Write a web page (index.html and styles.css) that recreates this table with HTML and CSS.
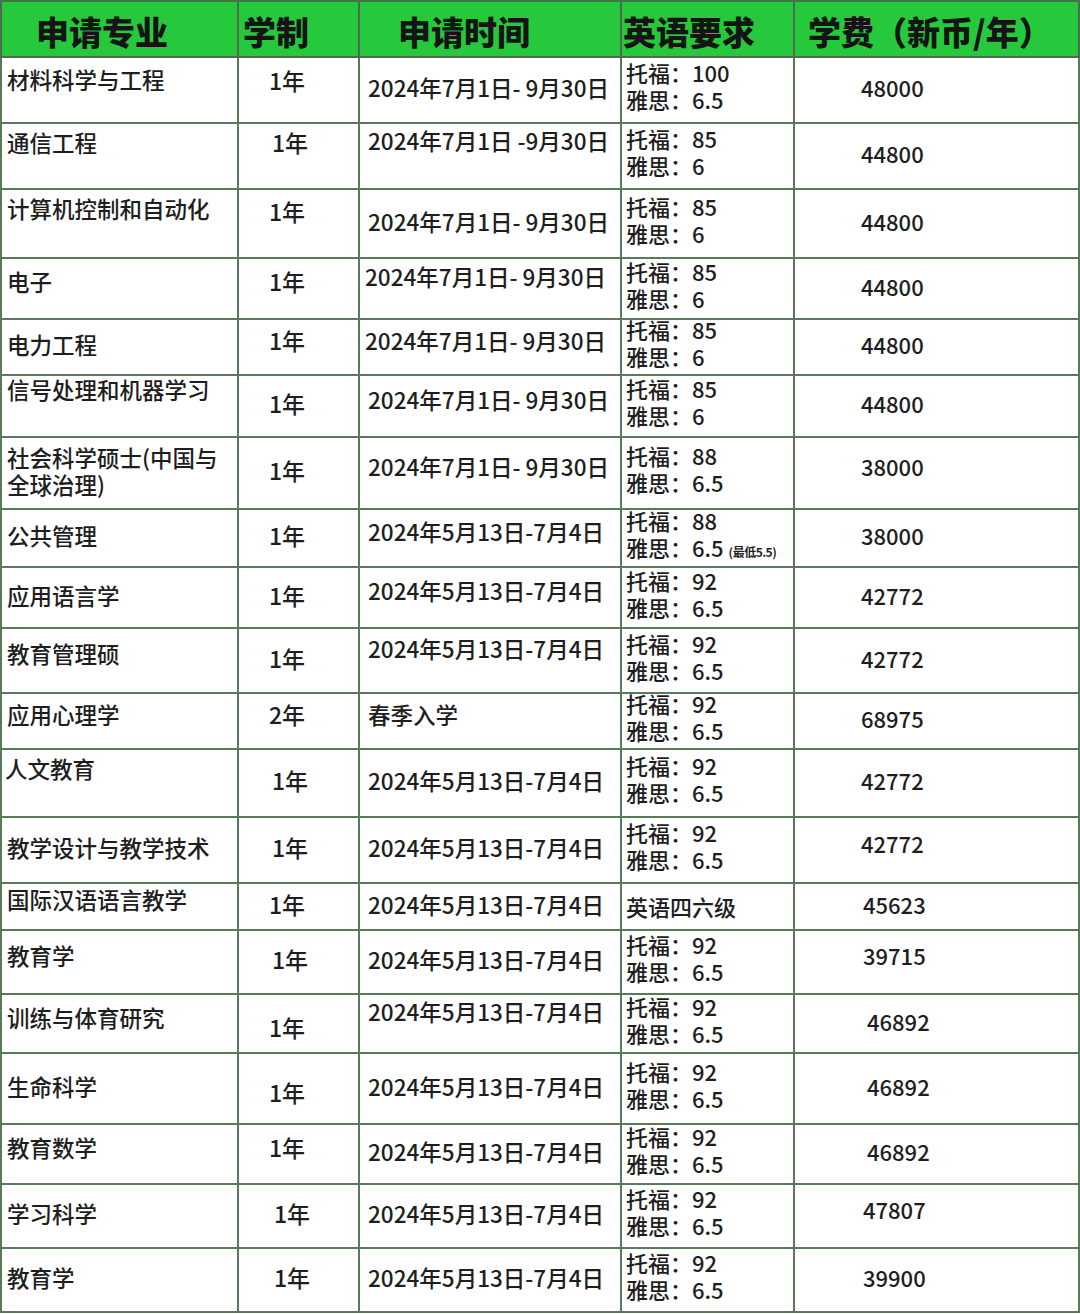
FILE: index.html
```html
<!DOCTYPE html>
<html lang="zh-CN">
<head>
<meta charset="utf-8">
<title>申请专业</title>
<link rel="stylesheet" href="styles.css">
</head>
<body>
<table class="sheet">
  <colgroup>
    <col class="c-major"><col class="c-len"><col class="c-date"><col class="c-eng"><col class="c-fee">
  </colgroup>
  <thead>
    <tr class="head">
      <th class="h-major">申请专业</th>
      <th class="h-len">学制</th>
      <th class="h-date">申请时间</th>
      <th class="h-eng">英语要求</th>
      <th class="h-fee">学费（新币/年）</th>
    </tr>
  </thead>
  <tbody>
    <tr>
      <td class="major top t8">材料科学与工程</td>
      <td class="len top t9">1年</td>
      <td class="date">2024年7月1日- 9月30日</td>
      <td class="eng"><div class="req">托福：100<br>雅思：6.5</div></td>
      <td class="fee">48000</td>
    </tr>
    <tr>
      <td class="major top t5">通信工程</td>
      <td class="len top t5 x3">1年</td>
      <td class="date top t3">2024年7月1日 -9月30日</td>
      <td class="eng"><div class="req">托福：85<br>雅思：6</div></td>
      <td class="fee">44800</td>
    </tr>
    <tr>
      <td class="major top t5">计算机控制和自动化</td>
      <td class="len top t8">1年</td>
      <td class="date">2024年7月1日- 9月30日</td>
      <td class="eng"><div class="req">托福：85<br>雅思：6</div></td>
      <td class="fee">44800</td>
    </tr>
    <tr>
      <td class="major up">电子</td>
      <td class="len up">1年</td>
      <td class="date up2 xl">2024年7月1日- 9月30日</td>
      <td class="eng"><div class="req">托福：85<br>雅思：6</div></td>
      <td class="fee">44800</td>
    </tr>
    <tr>
      <td class="major">电力工程</td>
      <td class="len up">1年</td>
      <td class="date up xl">2024年7月1日- 9月30日</td>
      <td class="eng"><div class="req">托福：85<br>雅思：6</div></td>
      <td class="fee">44800</td>
    </tr>
    <tr>
      <td class="major top t0">信号处理和机器学习</td>
      <td class="len">1年</td>
      <td class="date up">2024年7月1日- 9月30日</td>
      <td class="eng"><div class="req">托福：85<br>雅思：6</div></td>
      <td class="fee">44800</td>
    </tr>
    <tr>
      <td class="major two">社会科学硕士(中国与<br>全球治理)</td>
      <td class="len">1年</td>
      <td class="date up">2024年7月1日- 9月30日</td>
      <td class="eng"><div class="req">托福：88<br>雅思：6.5</div></td>
      <td class="fee up">38000</td>
    </tr>
    <tr>
      <td class="major">公共管理</td>
      <td class="len">1年</td>
      <td class="date up">2024年5月13日-7月4日</td>
      <td class="eng"><div class="req">托福：88<br>雅思：6.5 <span class="note">(最低5.5)</span></div></td>
      <td class="fee">38000</td>
    </tr>
    <tr>
      <td class="major">应用语言学</td>
      <td class="len">1年</td>
      <td class="date up">2024年5月13日-7月4日</td>
      <td class="eng"><div class="req">托福：92<br>雅思：6.5</div></td>
      <td class="fee">42772</td>
    </tr>
    <tr>
      <td class="major up">教育管理硕</td>
      <td class="len">1年</td>
      <td class="date up2">2024年5月13日-7月4日</td>
      <td class="eng"><div class="req">托福：92<br>雅思：6.5</div></td>
      <td class="fee">42772</td>
    </tr>
    <tr>
      <td class="major up">应用心理学</td>
      <td class="len up">2年</td>
      <td class="date up">春季入学</td>
      <td class="eng"><div class="req">托福：92<br>雅思：6.5</div></td>
      <td class="fee">68975</td>
    </tr>
    <tr>
      <td class="major top t5 x0">人文教育</td>
      <td class="len x3">1年</td>
      <td class="date">2024年5月13日-7月4日</td>
      <td class="eng"><div class="req">托福：92<br>雅思：6.5</div></td>
      <td class="fee">42772</td>
    </tr>
    <tr>
      <td class="major">教学设计与教学技术</td>
      <td class="len x3">1年</td>
      <td class="date">2024年5月13日-7月4日</td>
      <td class="eng"><div class="req">托福：92<br>雅思：6.5</div></td>
      <td class="fee up">42772</td>
    </tr>
    <tr>
      <td class="major up">国际汉语语言教学</td>
      <td class="len">1年</td>
      <td class="date">2024年5月13日-7月4日</td>
      <td class="eng">英语四六级</td>
      <td class="fee fx">45623</td>
    </tr>
    <tr>
      <td class="major up">教育学</td>
      <td class="len x3">1年</td>
      <td class="date">2024年5月13日-7月4日</td>
      <td class="eng"><div class="req">托福：92<br>雅思：6.5</div></td>
      <td class="fee fx up">39715</td>
    </tr>
    <tr>
      <td class="major top t9">训练与体育研究</td>
      <td class="len dn">1年</td>
      <td class="date up2">2024年5月13日-7月4日</td>
      <td class="eng"><div class="req">托福：92<br>雅思：6.5</div></td>
      <td class="fee fx2">46892</td>
    </tr>
    <tr>
      <td class="major">生命科学</td>
      <td class="len dn">1年</td>
      <td class="date">2024年5月13日-7月4日</td>
      <td class="eng"><div class="req">托福：92<br>雅思：6.5</div></td>
      <td class="fee fx2">46892</td>
    </tr>
    <tr>
      <td class="major up">教育数学</td>
      <td class="len up">1年</td>
      <td class="date">2024年5月13日-7月4日</td>
      <td class="eng"><div class="req">托福：92<br>雅思：6.5</div></td>
      <td class="fee fx2">46892</td>
    </tr>
    <tr>
      <td class="major">学习科学</td>
      <td class="len x4">1年</td>
      <td class="date">2024年5月13日-7月4日</td>
      <td class="eng"><div class="req">托福：92<br>雅思：6.5</div></td>
      <td class="fee fx up">47807</td>
    </tr>
    <tr>
      <td class="major">教育学</td>
      <td class="len x4">1年</td>
      <td class="date">2024年5月13日-7月4日</td>
      <td class="eng"><div class="req">托福：92<br>雅思：6.5</div></td>
      <td class="fee fx">39900</td>
    </tr>
  </tbody>
</table>
</body>
</html>
```
FILE: styles.css
```css
html, body {
  margin: 0;
  padding: 0;
  background: #ffffff;
}

body {
  width: 1080px;
  height: 1314px;
  overflow: hidden;
  font-family: "Noto Sans CJK SC", "Noto Sans", sans-serif;
  color: #1e1e1e;
}

.sheet {
  table-layout: fixed;
  border-collapse: collapse;
  width: 1078px;
  margin-left: 0;
}

.c-major { width: 237px; }
.c-len { width: 121px; }
.c-date { width: 262px; }
.c-eng { width: 173px; }
.c-fee { width: 285px; }

.sheet th,
.sheet td {
  border: 2px solid #587a58;
  padding: 0 0 5px 0;
  text-align: left;
  vertical-align: middle;
  white-space: nowrap;
}

.head {
  height: 56px;
  background: #26c93c;
}

.head th {
  font-size: 33px;
  font-weight: 900;
  line-height: 40px;
  color: #141414;
  padding: 3px 0 0 0;
  border-color: #4d6e4d;
}

.h-major { padding-left: 34px !important; }
.h-len { padding-left: 4px !important; }
.h-date { padding-left: 38px !important; }
.h-eng { padding-left: 1px !important; }
.h-fee { padding-left: 13px !important; }

tbody tr:nth-child(1) { height: 66px; }
tbody tr:nth-child(2) { height: 66px; }
tbody tr:nth-child(3) { height: 69px; }
tbody tr:nth-child(4) { height: 61px; }
tbody tr:nth-child(5) { height: 56px; }
tbody tr:nth-child(6) { height: 62px; }
tbody tr:nth-child(7) { height: 72px; }
tbody tr:nth-child(8) { height: 58px; }
tbody tr:nth-child(9) { height: 61px; }
tbody tr:nth-child(10) { height: 65px; }
tbody tr:nth-child(11) { height: 56px; }
tbody tr:nth-child(12) { height: 68px; }
tbody tr:nth-child(13) { height: 66px; }
tbody tr:nth-child(14) { height: 47px; }
tbody tr:nth-child(15) { height: 64px; }
tbody tr:nth-child(16) { height: 59px; }
tbody tr:nth-child(17) { height: 71px; }
tbody tr:nth-child(18) { height: 60px; }
tbody tr:nth-child(19) { height: 64px; }
tbody tr:nth-child(20) { height: 64px; }

.sheet td {
  font-size: 22px;
  font-weight: 500;
  line-height: 27px;
}

.major { padding-left: 5px !important; font-size: 22.5px !important; white-space: normal; }
.len { padding-left: 30px !important; font-size: 23px !important; }
.date { padding-left: 8px !important; font-size: 22.5px !important; }
.eng { padding-left: 4px !important; padding-bottom: 0 !important; }
.req { margin-top: -8px; }
.fee { padding-left: 66px !important; }

.top { vertical-align: top !important; padding-bottom: 0 !important; }
.t0 { padding-top: 0 !important; }
.t3 { padding-top: 3px !important; }
.t5 { padding-top: 5px !important; }
.t8 { padding-top: 8px !important; }
.t9 { padding-top: 9px !important; }

.up { padding-bottom: 14px !important; }
.up2 { padding-bottom: 24px !important; }
.dn { padding-top: 12px !important; }

.x0 { padding-left: 3px !important; }
.x3 { padding-left: 33px !important; }
.x4 { padding-left: 35px !important; }
.xl { padding-left: 5px !important; }
.fx { padding-left: 68px !important; }
.fx2 { padding-left: 72px !important; }

.note {
  font-size: 12px;
  font-weight: 700;
  letter-spacing: -0.5px;
  line-height: 1;
}
```
